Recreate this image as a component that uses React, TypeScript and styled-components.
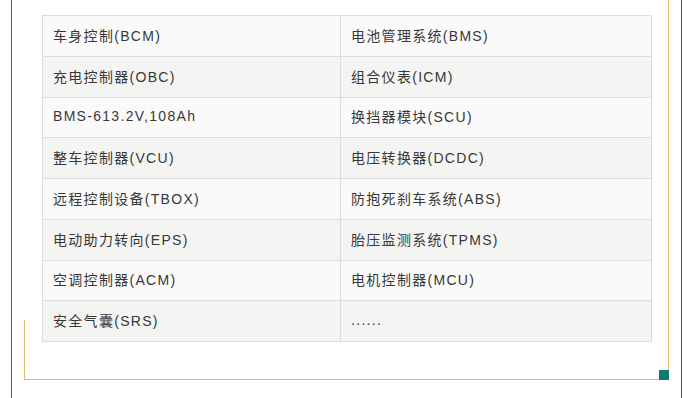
import React from "react";
import styled, { createGlobalStyle } from "styled-components";

const GlobalStyle = createGlobalStyle`
  body {
    margin: 0;
    background: #fff;
    font-family: "Liberation Sans", "Noto Sans CJK SC", sans-serif;
  }
`;

const Page = styled.div`
  box-sizing: border-box;
  margin-left: 11px;
  width: 671px;
  height: 398px;
  border-left: 1px solid #1c6f6a;
  border-right: 1px solid #1c6f6a;
`;

const Frame = styled.div`
  position: relative;
  box-sizing: border-box;
  margin-left: 12px;
  width: 645px;
  height: 380px;
  padding: 15px 0 0 18px;
  border-right: 1px solid #e6b66a;
  border-bottom: 1px solid #e6b66a;

  /* short orange stub on the left, lower corner */
  &::before {
    content: "";
    position: absolute;
    left: 0;
    bottom: -1px;
    width: 1px;
    height: 60px;
    background: #e6b66a;
  }

  /* teal square in the lower right corner */
  &::after {
    content: "";
    position: absolute;
    right: -1px;
    bottom: -1px;
    width: 10px;
    height: 10px;
    background: #0c7a70;
  }
`;

const Table = styled.div`
  display: grid;
  grid-template-columns: 298px 311px;
  width: 609px;
  box-sizing: border-box;
  border-top: 1px solid #dcdcdc;
  border-left: 1px solid #dcdcdc;
`;

const Cell = styled.div<{ $even: boolean }>`
  box-sizing: border-box;
  height: 40.75px;
  display: flex;
  align-items: center;
  padding: 0 0 2px 10px;
  border-right: 1px solid #dcdcdc;
  border-bottom: 1px solid #dcdcdc;
  background: ${(p) => (p.$even ? "#f4f4f2" : "#fafafa")};
  color: #383838;
  font-size: 14px;
  letter-spacing: 1.3px;
  white-space: nowrap;
`;

const rows: [string, string][] = [
  ["车身控制(BCM)", "电池管理系统(BMS)"],
  ["充电控制器(OBC)", "组合仪表(ICM)"],
  ["BMS-613.2V,108Ah", "换挡器模块(SCU)"],
  ["整车控制器(VCU)", "电压转换器(DCDC)"],
  ["远程控制设备(TBOX)", "防抱死刹车系统(ABS)"],
  ["电动助力转向(EPS)", "胎压监测系统(TPMS)"],
  ["空调控制器(ACM)", "电机控制器(MCU)"],
  ["安全气囊(SRS)", "......"],
];

const App = () => {
  return (
    <>
      <GlobalStyle />
      <Page>
        <Frame>
          <Table>
            {rows.map(([left, right], i) => (
              <React.Fragment key={i}>
                <Cell $even={i % 2 === 1}>{left}</Cell>
                <Cell $even={i % 2 === 1}>{right}</Cell>
              </React.Fragment>
            ))}
          </Table>
        </Frame>
      </Page>
    </>
  );
};

export default App;
